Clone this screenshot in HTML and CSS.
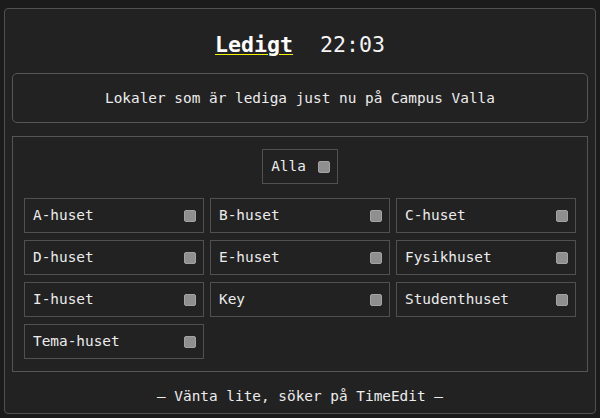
FILE: index.html
```html
<!DOCTYPE html>
<html lang="sv">
<head>
<meta charset="utf-8">
<title>Ledigt</title>
<link rel="stylesheet" href="styles.css">
</head>
<body>
<main class="app">
  <h1 class="title"><a class="brand" href="#">Ledigt</a><span class="clock">22:03</span></h1>
  <p class="intro">Lokaler som är lediga just nu på Campus Valla</p>
  <section class="filters">
    <label class="chip chip-all"><span>Alla</span><input type="checkbox" class="box"></label>
    <div class="grid">
      <label class="chip"><span>A-huset</span><input type="checkbox" class="box"></label>
      <label class="chip"><span>B-huset</span><input type="checkbox" class="box"></label>
      <label class="chip"><span>C-huset</span><input type="checkbox" class="box"></label>
      <label class="chip"><span>D-huset</span><input type="checkbox" class="box"></label>
      <label class="chip"><span>E-huset</span><input type="checkbox" class="box"></label>
      <label class="chip"><span>Fysikhuset</span><input type="checkbox" class="box"></label>
      <label class="chip"><span>I-huset</span><input type="checkbox" class="box"></label>
      <label class="chip"><span>Key</span><input type="checkbox" class="box"></label>
      <label class="chip"><span>Studenthuset</span><input type="checkbox" class="box"></label>
      <label class="chip"><span>Tema-huset</span><input type="checkbox" class="box"></label>
    </div>
  </section>
  <p class="status">— Vänta lite, söker på TimeEdit —</p>
</main>
</body>
</html>
```
FILE: styles.css
```css
html {
  background: #1b1b1b;
}
body {
  margin: 0;
  padding: 8px 4px 4px;
  font-family: "DejaVu Sans Mono", "Liberation Mono", monospace;
  font-size: 14.4px;
  line-height: 17px;
  color: #ececec;
}
.app {
  background: #222222;
  border: 1px solid #505050;
  border-radius: 4px;
  padding: 0 7px 8px;
  display: flex;
  flex-direction: column;
}
.title {
  margin: 0 0 15px;
  padding-top: 23px;
  font-size: 21.6px;
  line-height: 26px;
  font-weight: normal;
  display: flex;
  justify-content: center;
  gap: 27px;
}
.brand {
  color: #ffffff;
  font-weight: bold;
  text-decoration: underline;
  text-decoration-color: #f2f200;
  text-decoration-thickness: 1px;
  text-underline-offset: 2px;
}
.clock {
  color: #f4f4f4;
}
.intro {
  margin: 0 0 13px;
  padding: 16px 0 15px;
  border: 1px solid #565656;
  border-radius: 5px;
  text-align: center;
}
.filters {
  border: 1px solid #555555;
  padding: 12px 11px;
  display: flex;
  flex-direction: column;
  align-items: center;
  gap: 14px;
}
.grid {
  align-self: stretch;
  display: grid;
  grid-template-columns: repeat(3, 1fr);
  column-gap: 6px;
  row-gap: 7px;
}
.chip {
  box-sizing: border-box;
  height: 35px;
  border: 1px solid #505050;
  padding: 0 7px 0 8px;
  display: flex;
  align-items: center;
  justify-content: space-between;
}
.chip-all {
  gap: 12px;
}
.box {
  appearance: none;
  -webkit-appearance: none;
  margin: 0;
  width: 12px;
  height: 12px;
  box-sizing: border-box;
  background: #8f8f8f;
  border: 1px solid #a3a3a3;
  border-radius: 2px;
}
.status {
  margin: 16px 0 0;
  text-align: center;
}
```
